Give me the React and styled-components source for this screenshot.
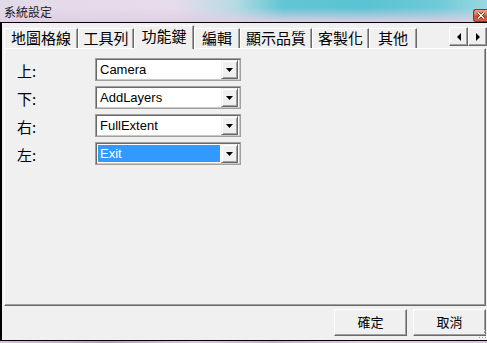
import React from "react";
import styled, { createGlobalStyle, css } from "styled-components";

const Global = createGlobalStyle`
  html, body { margin: 0; padding: 0; background: #d9c3da; overflow: hidden; }
  * { box-sizing: border-box; }
`;

const CJK = `"Noto Sans CJK TC", "Noto Sans CJK SC", sans-serif`;
const LATIN = `"Liberation Sans", "Noto Sans CJK TC", sans-serif`;

const Window = styled.div`
  width: 487px;
  height: 343px;
  display: flex;
  flex-direction: column;
  overflow: hidden;
`;

const TitleBar = styled.div`
  height: 22px;
  flex: none;
  display: flex;
  align-items: flex-start;
  padding-left: 4px;
  overflow: hidden;
  background:
    linear-gradient(to bottom, rgba(226, 212, 232, 0) 35%, rgba(224, 206, 228, 0.95) 100%),
    linear-gradient(to right, #e3dae9 0%, #e6dcea 36%, #b7dbe3 48%, #62c6d4 58%, #58c3d2 75%, #6fcad7 90%, #9ad8e1 100%);
`;

const Title = styled.span`
  font-family: ${CJK};
  font-size: 12px;
  line-height: 12px;
  margin-top: 6px;
  color: #1a1a1a;
`;

const CloseButton = styled.div`
  margin-left: auto;
  margin-top: 9px;
  width: 14px;
  height: 13px;
  border: 1px solid #8a3322;
  border-right: none;
  border-radius: 3px 0 0 3px;
  background: linear-gradient(to bottom, #eaa08a 0%, #d8735a 45%, #c5492f 55%, #d2654a 100%);
  display: flex;
  align-items: center;
  padding-left: 3px;
`;

const Frame = styled.div`
  height: 319px;
  flex: none;
  position: relative;
  display: flex;
  flex-direction: column;
  background: #f0f0f0;
  border-top: 1px solid #000;
  border-bottom: 1px solid #000;
  border-left: 2px solid #000;
  padding: 0 1px 0 2px;
`;

const TabStrip = styled.div`
  height: 25px;
  flex: none;
  display: flex;
  align-items: flex-end;
`;

const Tab = styled.div`
  width: ${(p) => p.$w}px;
  height: 20px;
  flex: none;
  border-top: 1px solid #fff;
  border-left: 1px solid #fff;
  border-right: 1px solid #696969;
  box-shadow: inset -1px 0 #a0a0a0;
  background: #f0f0f0;
  font-family: ${CJK};
  font-size: 15px;
  line-height: 18px;
  text-align: center;
  color: #000;
  ${(p) =>
    p.$active &&
    css`
      height: 24px;
      margin-bottom: -1px;
      position: relative;
      z-index: 1;
      line-height: 20px;
    `}
`;

const ScrollGroup = styled.div`
  margin-left: auto;
  margin-right: -1px;
  align-self: flex-start;
  margin-top: 4px;
  display: flex;
`;

const ScrollButton = styled.div`
  width: 19px;
  height: 19px;
  background: #f0f0f0;
  border-top: 1px solid #fff;
  border-left: 1px solid #fff;
  border-right: 1px solid #696969;
  border-bottom: 1px solid #696969;
  box-shadow: inset -1px -1px #a0a0a0;
  display: flex;
  align-items: center;
  justify-content: center;
`;

const Panel = styled.div`
  height: 258px;
  flex: none;
  border-top: 1px solid #fff;
  border-left: 1px solid #fff;
  border-right: 1px solid #696969;
  border-bottom: 1px solid #696969;
  box-shadow: inset -1px -1px #a0a0a0;
  padding: 9px 0 0 12px;
`;

const Form = styled.div`
  display: grid;
  grid-template-columns: 78px 146px;
  grid-auto-rows: 23px;
  row-gap: 5px;
`;

const Label = styled.div`
  font-family: ${CJK};
  font-size: 15px;
  line-height: 23px;
  color: #000;
  padding-top: 1px;
`;

const Combo = styled.div`
  display: flex;
  border: 1px solid #a0a0a0;
  box-shadow: inset 1px 1px #696969, inset -1px -1px #c8c8c8;
  background: #fff;
  padding: 2px 2px 2px 2px;
`;

const ComboValue = styled.div`
  flex: 1;
  margin-right: 1px;
  padding-left: 2px;
  font-family: ${LATIN};
  font-size: 13px;
  line-height: 17px;
  color: ${(p) => (p.$selected ? "#fff" : "#000")};
  background: ${(p) => (p.$selected ? "#3399ff" : "transparent")};
`;

const DropButton = styled.div`
  width: 17px;
  flex: none;
  margin: -1px 0;
  background: #f0f0f0;
  border-top: 1px solid #f0f0f0;
  border-left: 1px solid #f0f0f0;
  border-right: 1px solid #696969;
  border-bottom: 1px solid #696969;
  box-shadow: inset 1px 1px #fff, inset -1px -1px #a0a0a0;
  display: flex;
  align-items: center;
  justify-content: center;
`;

const ButtonRow = styled.div`
  margin-top: 3px;
  height: 27px;
  flex: none;
  display: flex;
  justify-content: flex-end;
  gap: 6px;
`;

const Button = styled.div`
  width: 73px;
  height: 27px;
  background: #f0f0f0;
  border-top: 1px solid #fff;
  border-left: 1px solid #fff;
  border-right: 1px solid #696969;
  border-bottom: 1px solid #696969;
  box-shadow: inset -1px -1px #a0a0a0;
  font-family: ${CJK};
  font-size: 13px;
  line-height: 24px;
  text-align: center;
  color: #000;
`;

const Grip = styled.svg`
  position: absolute;
  right: 1px;
  bottom: 0;
`;

const BottomStrip = styled.div`
  height: 2px;
  flex: none;
  background: linear-gradient(to right, #d7c0d8 0%, #b59ab8 22%, #dcc6dc 40%, #c5aac8 56%, #e2cde0 75%, #d8c2d9 100%);
`;

const tabs = [
  { label: "地圖格線", w: 74 },
  { label: "工具列", w: 56 },
  { label: "功能鍵", w: 60, active: true },
  { label: "編輯", w: 46 },
  { label: "顯示品質", w: 72 },
  { label: "客製化", w: 57 },
  { label: "其他", w: 48 },
];

const rows = [
  { label: "上:", value: "Camera" },
  { label: "下:", value: "AddLayers" },
  { label: "右:", value: "FullExtent" },
  { label: "左:", value: "Exit", selected: true },
];

const DownArrow = () => (
  <svg width="7" height="4" viewBox="0 0 7 4">
    <path d="M0 0h7L3.5 4z" fill="#000" />
  </svg>
);

export default function App() {
  return (
    <>
      <Global />
      <Window>
        <TitleBar>
          <Title>系統設定</Title>
          <CloseButton>
            <svg width="8" height="7" viewBox="0 0 8 7">
              <path d="M1 0.5l6 6M7 0.5l-6 6" stroke="#5a1a10" strokeWidth="2.6" />
              <path d="M1 0.5l6 6M7 0.5l-6 6" stroke="#fff" strokeWidth="1.4" />
            </svg>
          </CloseButton>
        </TitleBar>
        <Frame>
          <TabStrip>
            {tabs.map((t) => (
              <Tab key={t.label} $w={t.w} $active={t.active}>
                {t.label}
              </Tab>
            ))}
            <ScrollGroup>
              <ScrollButton>
                <svg width="4" height="8" viewBox="0 0 4 8">
                  <path d="M4 0v8L0 4z" fill="#000" />
                </svg>
              </ScrollButton>
              <ScrollButton>
                <svg width="4" height="8" viewBox="0 0 4 8">
                  <path d="M0 0v8L4 4z" fill="#000" />
                </svg>
              </ScrollButton>
            </ScrollGroup>
          </TabStrip>
          <Panel>
            <Form>
              {rows.map((r) => (
                <React.Fragment key={r.label}>
                  <Label>{r.label}</Label>
                  <Combo>
                    <ComboValue $selected={r.selected}>{r.value}</ComboValue>
                    <DropButton>
                      <DownArrow />
                    </DropButton>
                  </Combo>
                </React.Fragment>
              ))}
            </Form>
          </Panel>
          <ButtonRow>
            <Button>確定</Button>
            <Button>取消</Button>
          </ButtonRow>
          <Grip width="11" height="11" viewBox="0 0 11 11">
            {[
              [9, 1], [9, 4], [6, 4], [9, 7], [6, 7], [3, 7],
            ].map(([x, y]) => (
              <g key={`${x}-${y}`}>
                <rect x={x} y={y} width="1" height="1" fill="#fff" />
                <rect x={x + 1} y={y + 1} width="1" height="1" fill="#a0a0a0" />
              </g>
            ))}
          </Grip>
        </Frame>
        <BottomStrip />
      </Window>
    </>
  );
}
